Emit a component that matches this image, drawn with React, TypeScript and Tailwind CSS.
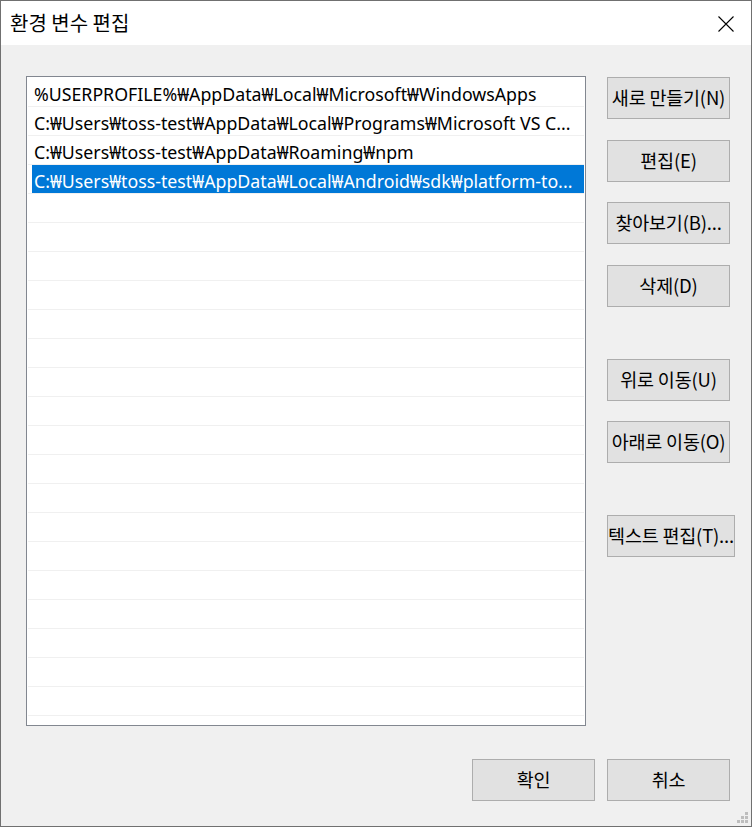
import { FC } from 'react';

const paths = [
  '%USERPROFILE%₩AppData₩Local₩Microsoft₩WindowsApps',
  'C:₩Users₩toss-test₩AppData₩Local₩Programs₩Microsoft VS C...',
  'C:₩Users₩toss-test₩AppData₩Roaming₩npm',
  'C:₩Users₩toss-test₩AppData₩Local₩Android₩sdk₩platform-to...',
];

const SELECTED = 3;
const ROW_COUNT = 23;

interface WinButtonProps {
  label: string
  className?: string
}

const WinButton: FC<WinButtonProps> = ({ label, className = '' }) => (
  <button
    className={`h-[42px] w-[123px] shrink-0 flex items-center justify-center overflow-hidden whitespace-nowrap bg-[#e1e1e1] border border-[#adadad] text-[18.5px] tracking-[-0.2px] text-black font-['Noto_Sans_CJK_KR',sans-serif] ${className}`}
  >
    {label}
  </button>
);

const App: FC = () => {
  const rows = Array.from({ length: ROW_COUNT }, (_, i) => paths[i] ?? '');

  return (
    <div className="relative w-[752px] h-[827px] flex flex-col border border-[#707070] bg-[#f0f0f0] font-['Noto_Sans','Noto_Sans_CJK_KR',sans-serif] overflow-hidden">
      {/* title bar */}
      <div className="h-[44px] shrink-0 bg-white flex items-center justify-between pl-[9px] pr-[17px]">
        <span className="text-[20px] text-black font-['Noto_Sans_CJK_KR',sans-serif]">환경 변수 편집</span>
        <svg width="16" height="16" viewBox="0 0 16 16" className="mt-[2px]">
          <path d="M0.5 0.5L15.5 15.5M15.5 0.5L0.5 15.5" stroke="#000" strokeWidth="1.1" fill="none" />
        </svg>
      </div>

      {/* body */}
      <div className="flex-1 flex flex-col pl-[25px] pr-[21px] pt-[31px]">
        <div className="flex">
          <div className="w-[560px] h-[650px] shrink-0 border border-[#828790] bg-white pt-[1px] px-[1px] overflow-hidden">
            {rows.map((text, i) => (
              <div key={i} className="h-[29px] border-b border-[#f0f0f0] flex">
                <div
                  className={`ml-[4px] flex-1 h-[28px] flex items-center pt-[6px] pl-[2px] whitespace-nowrap overflow-hidden text-[17.75px] leading-none ${i === SELECTED ? 'bg-[#0078d7] text-white' : 'text-black'}`}
                >
                  {text}
                </div>
              </div>
            ))}
          </div>

          <div className="ml-[21px] flex flex-col">
            <WinButton label="새로 만들기(N)" className="mt-[1px]" />
            <WinButton label="편집(E)" className="mt-[21px]" />
            <WinButton label="찾아보기(B)..." className="mt-[20px]" />
            <WinButton label="삭제(D)" className="mt-[21px]" />
            <WinButton label="위로 이동(U)" className="mt-[52px]" />
            <WinButton label="아래로 이동(O)" className="mt-[20px]" />
            <WinButton label="텍스트 편집(T)..." className="mt-[52px] w-[128px]" />
          </div>
        </div>

        <div className="flex justify-end gap-[12px] mt-[33px]">
          <WinButton label="확인" />
          <WinButton label="취소" />
        </div>
      </div>

      {/* size grip */}
      <svg width="12" height="12" viewBox="0 0 12 12" className="absolute right-[2px] bottom-[2px]">
        {[
          [8, 0], [4, 4], [8, 4], [0, 8], [4, 8], [8, 8],
        ].map(([x, y]) => (
          <rect key={`${x}-${y}`} x={x} y={y} width="3" height="3" fill="#bdbdbd" />
        ))}
      </svg>
    </div>
  );
};

export default App;
